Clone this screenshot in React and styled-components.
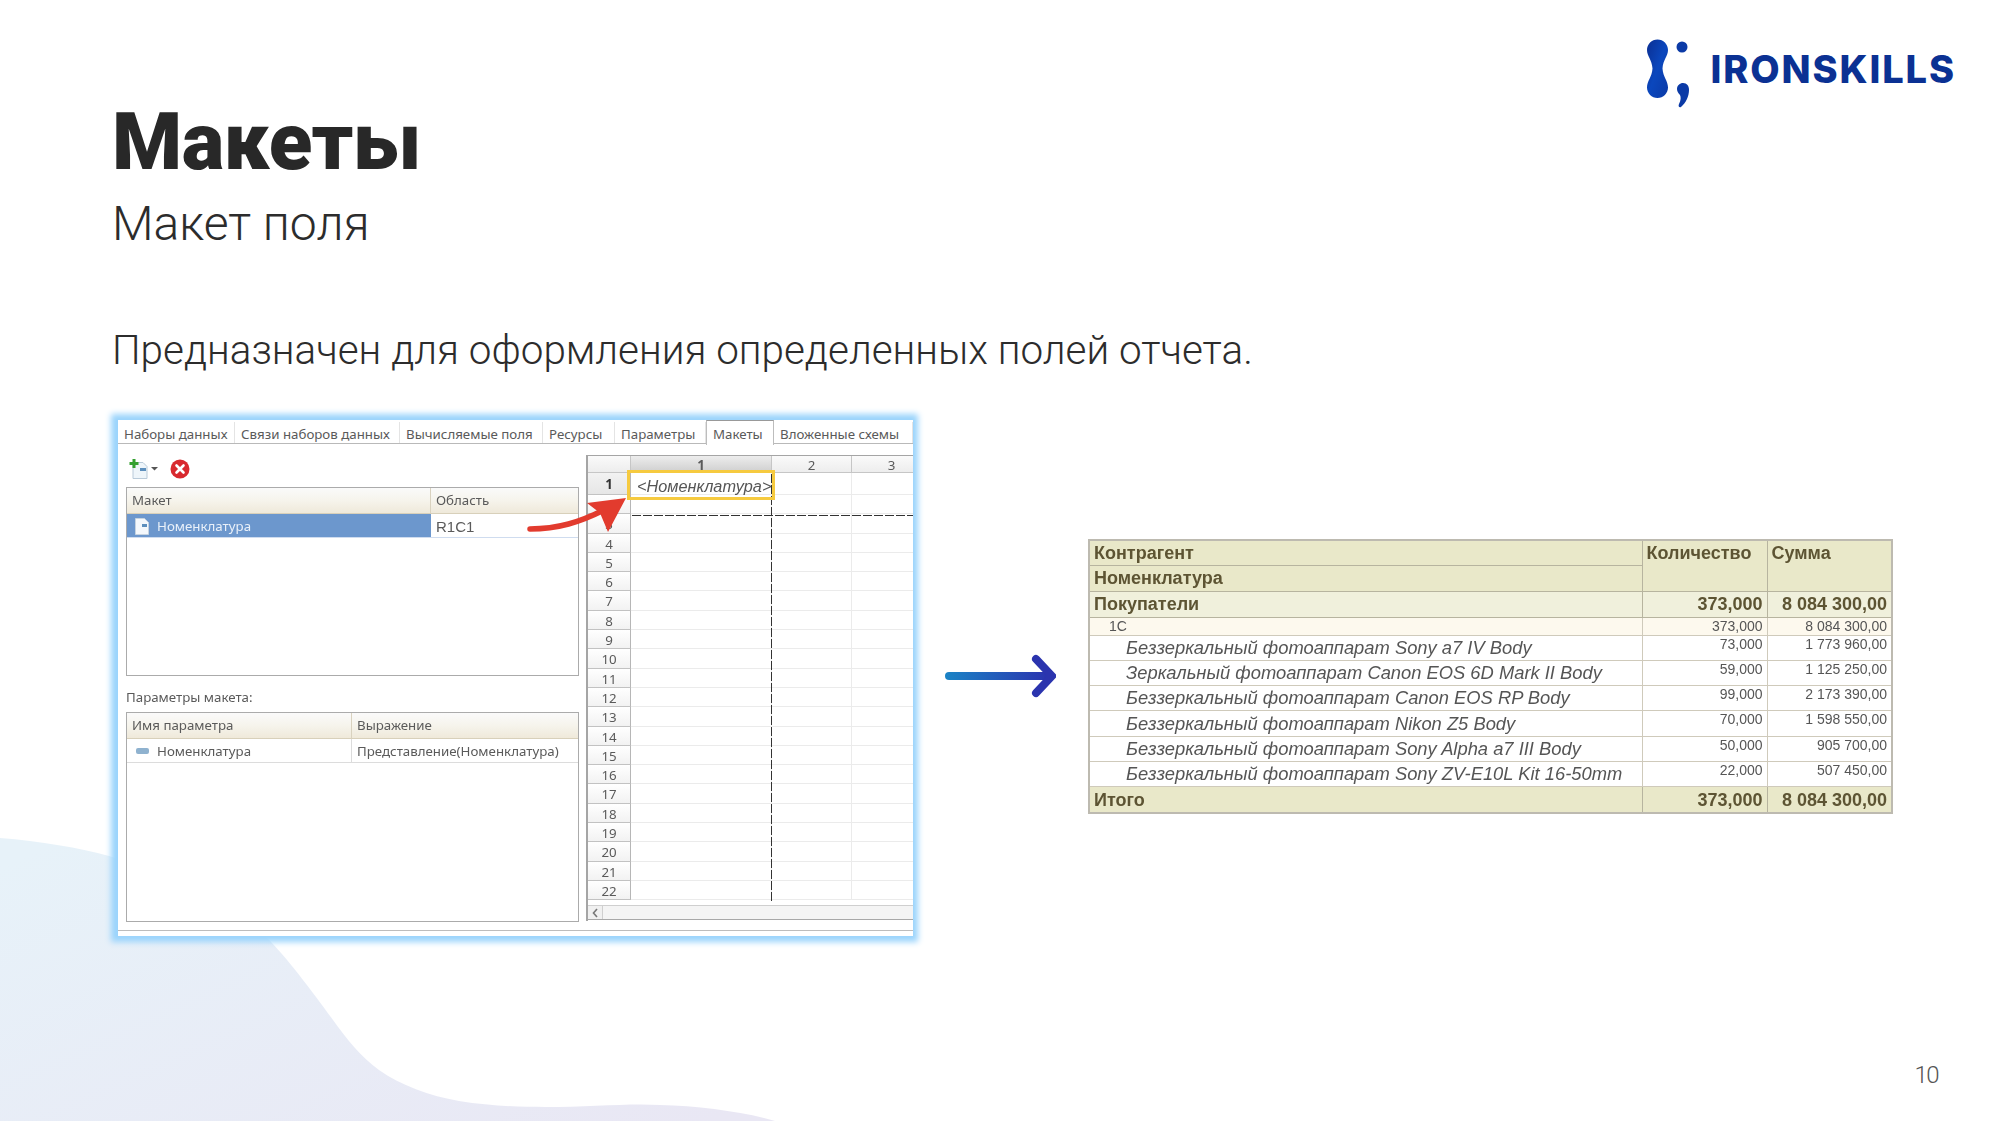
import React from "react";
import styled, { createGlobalStyle } from "styled-components";

const Global = createGlobalStyle`
  html, body { margin: 0; padding: 0; background: #fff; }
  * { box-sizing: border-box; }
`;

const Slide = styled.div`
  position: relative;
  width: 2000px;
  height: 1125px;
  overflow: hidden;
  background: #fff;
  font-family: "Inter", "Liberation Sans", sans-serif;
  display: flex;
  flex-direction: column;
`;
const BlobSvg = styled.svg`
  position: absolute;
  left: 0;
  top: 0;
  width: 2000px;
  height: 1125px;
`;
const Top = styled.header`
  position: relative;
  display: flex;
  justify-content: space-between;
  align-items: flex-start;
  padding: 0 44px 0 112px;
  height: 420px;
`;
const Heading = styled.div`
  display: flex;
  flex-direction: column;
  padding-top: 93px;
`;
const Title = styled.h1`
  margin: 0;
  font-family: "Roboto", sans-serif;
  font-weight: 900;
  font-size: 80px;
  line-height: 98px;
  letter-spacing: -0.4px;
  color: #282828;
`;
const Subtitle = styled.h2`
  margin: 5px 0 0;
  font-family: "Roboto", sans-serif;
  font-weight: 300;
  font-size: 48px;
  line-height: 56px;
  color: #2c2c2c;
`;
const Lead = styled.p`
  margin: 76px 0 0;
  font-family: "Roboto", sans-serif;
  font-weight: 300;
  font-size: 40.4px;
  line-height: 46px;
  color: #2c2c2c;
`;
const Logo = styled.div`
  display: flex;
  align-items: flex-start;
  gap: 19px;
  padding-top: 38px;
`;
const LogoWord = styled.span`
  margin-top: 8px;
  font-family: "Inter", sans-serif;
  font-weight: 800;
  font-size: 38px;
  line-height: 46px;
  letter-spacing: 1.9px;
  color: #0b3193;
`;

const Middle = styled.main`
  position: relative;
  display: flex;
  align-items: flex-start;
  padding-left: 118px;
`;
const Panel = styled.section`
  position: relative;
  width: 795px;
  height: 516px;
  background: #fff;
  box-shadow: -1px 0 6px 6px #9ad4fc;
  font-family: "Noto Sans", sans-serif;
  font-size: 13.3px;
  color: #5a5a5a;
  flex: none;
  filter: blur(0.4px);
`;
const Tabs = styled.div`
  display: flex;
  height: 24px;
  align-items: flex-end;
  border-bottom: 1.5px solid #b9b9b9;
`;
const Tab = styled.div`
  flex: none;
  width: ${(p) => p.$w}px;
  height: ${(p) => (p.$active ? 25 : 21)}px;
  margin-bottom: ${(p) => (p.$active ? -1.5 : 0)}px;
  padding-left: 6px;
  padding-top: 3px;
  display: flex;
  align-items: center;
  background: #fff;
  white-space: nowrap;
  border-right: 1px solid #e4e4e4;
  ${(p) => p.$active && "border: 1.5px solid #bdbdbd; border-bottom: none; border-top-color:#999;"}
`;
const Work = styled.div`
  display: grid;
  grid-template-columns: 468px 327px;
  height: 487px;
  border-bottom: 1.5px solid #bcbcbc;
  overflow: hidden;
`;
const LeftPane = styled.div`
  padding-left: 8px;
  width: 461px;
`;
const Toolbar = styled.div`
  height: 43px;
  padding: 15px 0 0 3px;
  display: flex;
  align-items: flex-start;
  gap: 9px;
`;
const ListBox = styled.div`
  width: 453px;
  height: ${(p) => p.$h}px;
  border: 1.5px solid #ababab;
  background: #fff;
`;
const ListHead = styled.div`
  display: grid;
  grid-template-columns: ${(p) => p.$first}px 1fr;
  height: 26px;
  background: linear-gradient(#fafafa, #f6f4ec 50%, #efe9da);
  border-bottom: 1.5px solid #d8d0ba;
`;
const ListHeadCell = styled.div`
  padding-left: 5px;
  line-height: 25px;
  border-right: ${(p) => (p.$sep ? "1.5px solid #d9d2bf" : "none")};
`;
const ListRow = styled.div`
  display: grid;
  grid-template-columns: ${(p) => p.$first}px 1fr;
  height: 24px;
  border-bottom: 1.5px solid ${(p) => p.$line};
`;
const ListCell = styled.div`
  display: flex;
  align-items: center;
  gap: 7px;
  padding-left: ${(p) => p.$pad}px;
  padding-top: 1px;
  white-space: nowrap;
  background: ${(p) => (p.$selected ? "#6c97cd" : "transparent")};
  color: ${(p) => (p.$selected ? "#e9f0f9" : "#5a5a5a")};
  border-right: ${(p) => (p.$sep ? "1.5px solid #dcdcdc" : "none")};
`;
const AreaText = styled.span`
  font-family: "Liberation Sans", sans-serif;
  font-size: 15px;
`;
const ParamLabel = styled.div`
  height: 36px;
  padding-top: 11px;
  line-height: 20px;
`;
const Sheet = styled.div`
  position: relative;
  margin-top: 11px;
  width: 327px;
  height: 466px;
  border-left: 2px solid #a5a5a5;
  border-top: 1.5px solid #a5a5a5;
  overflow: hidden;
`;
const SheetGrid = styled.div`
  display: grid;
  grid-template-columns: 43px 141px 80px 80px;
  grid-template-rows: 17px 22px repeat(21, 19.3px);
  width: 344px;
`;
const ColHead = styled.div`
  text-align: center;
  font-size: 13.3px;
  line-height: 18px;
  font-weight: ${(p) => (p.$sel ? 700 : 400)};
  background: ${(p) => (p.$sel ? "linear-gradient(#ededed,#cfcfcf)" : "linear-gradient(#fafafa,#ededed)")};
  border-right: 1.5px solid #c6c6c6;
  border-bottom: 1px solid #c6c6c6;
`;
const RowHead = styled.div`
  text-align: center;
  font-size: 13.3px;
  line-height: 18px;
  font-weight: ${(p) => (p.$sel ? 700 : 400)};
  padding-top: ${(p) => (p.$sel ? 2 : 1)}px;
  color: ${(p) => (p.$sel ? "#333" : "#5a5a5a")};
  background: ${(p) => (p.$sel ? "linear-gradient(#f2f2f2,#e6e6e6)" : "linear-gradient(#fff,#f2f2f2)")};
  border-right: 1.5px solid #b6b6b6;
  border-bottom: 1.5px solid #c2c2c2;
`;
const Cell = styled.div`
  position: relative;
  border-right: 1.5px solid #ebebeb;
  border-bottom: 1.5px solid #ebebeb;
`;
const FieldText = styled.span`
  position: absolute;
  left: 6px;
  top: 3px;
  font-family: "Liberation Sans", sans-serif;
  font-style: italic;
  font-size: 16.3px;
  line-height: 20px;
  white-space: nowrap;
  color: #555;
`;
const FieldBox = styled.div`
  position: absolute;
  left: -4px;
  top: -3px;
  width: 148px;
  height: 30px;
  border: 3px solid #f6ca3f;
  z-index: 2;
`;
const DashV = styled.div`
  position: absolute;
  left: 183px;
  top: 18px;
  width: 1.2px;
  height: 428px;
  background: repeating-linear-gradient(#333 0 9px, transparent 9px 11px);
`;
const DashH = styled.div`
  position: absolute;
  left: 44px;
  top: 59px;
  width: 290px;
  height: 1.2px;
  background: repeating-linear-gradient(90deg, #333 0 9px, transparent 9px 11px);
`;
const Scroll = styled.div`
  position: absolute;
  left: 0;
  top: 449px;
  width: 340px;
  height: 15px;
  display: flex;
  background: #f4f4f4;
  border-top: 1.5px solid #cfcfcf;
  border-bottom: 1.5px solid #a8a8a8;
`;
const ScrollBtn = styled.div`
  width: 15px;
  display: flex;
  align-items: center;
  justify-content: center;
  background: #f0f0f0;
  border-right: 1.5px solid #cfcfcf;
`;
const RedArrow = styled.svg`
  position: absolute;
  left: 0;
  top: 0;
  width: 795px;
  height: 516px;
  pointer-events: none;
`;

const ArrowSvg = styled.svg`
  flex: none;
  margin: 234px 0 0 29px;
  width: 114px;
  height: 44px;
`;
const ReportTable = styled.table`
  flex: none;
  margin: 119px 0 0 32px;
  width: 803px;
  table-layout: fixed;
  border-collapse: collapse;
  font-family: "Liberation Sans", sans-serif;
  border: 2px solid #bdbab0;
  filter: blur(0.3px);
`;
const Tr = styled.tr`
  height: ${(p) => p.$h}px;
  background: ${(p) => p.$bg};
`;
const Th = styled.td`
  padding: 0 0 0 ${(p) => p.$pad || 4}px;
  font-size: 18px;
  font-weight: 700;
  color: #5d5433;
  vertical-align: ${(p) => p.$valign || "middle"};
  line-height: 24px;
  border: 1px solid #b7b49f;
  white-space: nowrap;
`;
const NumB = styled(Th)`
  text-align: right;
  padding: 0 4px 0 0;
`;
const Td = styled.td`
  padding: 0 0 0 ${(p) => p.$pad || 0}px;
  font-size: ${(p) => p.$size || 18.35}px;
  font-style: ${(p) => (p.$italic ? "italic" : "normal")};
  color: #555;
  line-height: ${(p) => p.$lh || 20}px;
  white-space: nowrap;
  border: 1px solid #cfcabb;
`;
const NumT = styled(Td)`
  font-size: 14px;
  text-align: right;
  vertical-align: top;
  padding: 0 ${(p) => p.$right}px 0 0;
  line-height: 17px;
`;
const Footer = styled.footer`
  position: relative;
  margin-top: auto;
  display: flex;
  justify-content: flex-end;
  padding: 0 62px 36px 0;
  font-family: "Roboto", sans-serif;
  font-weight: 300;
  font-size: 24px;
  line-height: 28px;
  letter-spacing: -1.5px;
  color: #555;
`;

const items = [
  ["Беззеркальный фотоаппарат Sony a7 IV Body", "73,000", "1 773 960,00"],
  ["Зеркальный фотоаппарат Canon EOS 6D Mark II Body", "59,000", "1 125 250,00"],
  ["Беззеркальный фотоаппарат Canon EOS RP Body", "99,000", "2 173 390,00"],
  ["Беззеркальный фотоаппарат Nikon Z5 Body", "70,000", "1 598 550,00"],
  ["Беззеркальный фотоаппарат Sony Alpha a7 III Body", "50,000", "905 700,00"],
  ["Беззеркальный фотоаппарат Sony ZV-E10L Kit 16-50mm", "22,000", "507 450,00"],
];
const tabs = [
  ["Наборы данных", 117],
  ["Связи наборов данных", 165],
  ["Вычисляемые поля", 143],
  ["Ресурсы", 72],
  ["Параметры", 91],
  ["Макеты", 68],
  ["Вложенные схемы", 139],
];
const rows = Array.from({ length: 22 }, (_, i) => i + 1);

function DocIcon() {
  return (
    <svg width="16" height="17" viewBox="0 0 16 17">
      <path d="M1.5.5h9l4 4v12h-13z" fill="#f4f8fc" stroke="#c6d3e0" />
      <rect x="8" y="6" width="5" height="3" fill="#5d8fbd" />
    </svg>
  );
}

export default function App() {
  return (
    <Slide>
      <Global />
      <BlobSvg viewBox="0 0 2000 1125">
        <defs>
          <linearGradient id="blob" x1="0" y1="0.1" x2="1" y2="0.9">
            <stop offset="0" stopColor="#e7f2f9" />
            <stop offset="1" stopColor="#e9e7f4" />
          </linearGradient>
        </defs>
        <path
          d="M0 838C40 841 80 848 109 856C170 875 230 900 267 938C285 955 315 995 333 1020C345 1037 362 1058 379 1070C400 1085 430 1096 459 1101C490 1106 520 1107 545 1107C590 1107 630 1103 660 1105C700 1106 745 1112 775 1121L0 1121Z"
          fill="url(#blob)"
        />
      </BlobSvg>
      <Top>
        <Heading>
          <Title>Макеты</Title>
          <Subtitle>Макет поля</Subtitle>
          <Lead>Предназначен для оформления определенных полей отчета.</Lead>
        </Heading>
        <Logo>
          <svg width="44" height="72" viewBox="0 0 44 72">
            <defs>
              <linearGradient id="lg" x1="0" y1="0" x2="1" y2="1">
                <stop offset="0" stopColor="#0b2f93" />
                <stop offset="0.5" stopColor="#0b47bd" />
                <stop offset="1" stopColor="#0b3aa6" />
              </linearGradient>
            </defs>
            <path
              d="M10.5 1.5C16.3 1.5 21 6.2 21 12C21 18 16 22 15.5 30.5C16 39 21 43 21 49.5C21 55.3 16.3 60 10.5 60C4.7 60 0 55.3 0 49.5C0 43 5 39 5.5 30.5C5 22 0 18 0 12C0 6.2 4.7 1.5 10.5 1.5Z"
              fill="url(#lg)"
            />
            <circle cx="35" cy="9" r="5.5" fill="#0b3aa6" />
            <path
              d="M36 45C40 45 42 48 42 52C42 58 39 65 34 69C32 70 31 68 32 66C34 62 34 59 33 57C31 55 30 53 30 51C30 47.5 33 45 36 45Z"
              fill="#0b3aa6"
            />
          </svg>
          <LogoWord>IRONSKILLS</LogoWord>
        </Logo>
      </Top>
      <Middle>
        <Panel>
          <Tabs>
            {tabs.map(([t, w]) => (
              <Tab key={t} $w={w} $active={t === "Макеты"}>{t}</Tab>
            ))}
          </Tabs>
          <Work>
            <LeftPane>
              <Toolbar>
                <svg width="32" height="20" viewBox="0 0 32 20">
                  <path d="M4 3.5h10l4 4v12H4z" fill="#eef5fa" stroke="#b9cad9" />
                  <rect x="11" y="9" width="6" height="3" fill="#5d8fbd" />
                  <path d="M5 0v9M0.5 4.5h9" stroke="#35a030" strokeWidth="3" />
                  <path d="M22 8h7l-3.5 3.5z" fill="#555" />
                </svg>
                <svg width="20" height="20" viewBox="0 0 20 20">
                  <circle cx="10" cy="10" r="9.5" fill="#d8292e" />
                  <path d="M6.5 6.5l7 7M13.5 6.5l-7 7" stroke="#fff" strokeWidth="2.6" strokeLinecap="round" />
                </svg>
              </Toolbar>
              <ListBox $h={189}>
                <ListHead $first={304}>
                  <ListHeadCell $sep>Макет</ListHeadCell>
                  <ListHeadCell>Область</ListHeadCell>
                </ListHead>
                <ListRow $first={304} $line="#cfdcef">
                  <ListCell $selected $pad={7}>
                    <DocIcon />
                    Номенклатура
                  </ListCell>
                  <ListCell $pad={5}><AreaText>R1C1</AreaText></ListCell>
                </ListRow>
              </ListBox>
              <ParamLabel>Параметры макета:</ParamLabel>
              <ListBox $h={210}>
                <ListHead $first={225}>
                  <ListHeadCell $sep>Имя параметра</ListHeadCell>
                  <ListHeadCell>Выражение</ListHeadCell>
                </ListHead>
                <ListRow $first={225} $line="#dcdcdc">
                  <ListCell $sep $pad={7}>
                    <svg width="16" height="8" viewBox="0 0 16 8">
                      <rect x="2" y="1" width="13" height="6" rx="2" fill="#8fb2cf" />
                    </svg>
                    Номенклатура
                  </ListCell>
                  <ListCell $pad={5}>Представление(Номенклатура)</ListCell>
                </ListRow>
              </ListBox>
            </LeftPane>
            <Sheet>
              <SheetGrid>
                <ColHead />
                <ColHead $sel>1</ColHead>
                <ColHead>2</ColHead>
                <ColHead>3</ColHead>
                {rows.map((r) => (
                  <React.Fragment key={r}>
                    <RowHead $sel={r === 1}>{r}</RowHead>
                    <Cell>
                      {r === 1 && (
                        <>
                          <FieldText>&lt;Номенклатура&gt;</FieldText>
                          <FieldBox />
                        </>
                      )}
                    </Cell>
                    <Cell />
                    <Cell />
                  </React.Fragment>
                ))}
              </SheetGrid>
              <DashV />
              <DashH />
              <Scroll>
                <ScrollBtn>
                  <svg width="6" height="10" viewBox="0 0 6 10">
                    <path d="M5 1L1.5 5L5 9" fill="none" stroke="#777" strokeWidth="1.6" />
                  </svg>
                </ScrollBtn>
              </Scroll>
            </Sheet>
          </Work>
          <RedArrow viewBox="0 0 795 516">
            <path d="M412 109C440 109 462 102 486 90" fill="none" stroke="#e23b2e" strokeWidth="5.5" strokeLinecap="round" />
            <path d="M508 78L469 83L482 93L490 112Z" fill="#e23b2e" />
          </RedArrow>
        </Panel>
        <ArrowSvg viewBox="0 0 114 44">
          <defs>
            <linearGradient id="ar" gradientUnits="userSpaceOnUse" x1="0" y1="22" x2="110" y2="22">
              <stop offset="0" stopColor="#1a86c6" />
              <stop offset="1" stopColor="#2b30ae" />
            </linearGradient>
          </defs>
          <path d="M7 22H106" stroke="url(#ar)" strokeWidth="8" strokeLinecap="round" />
          <path d="M94 5L110 22L94 39" fill="none" stroke="#2b34ae" strokeWidth="8" strokeLinecap="round" strokeLinejoin="miter" />
        </ArrowSvg>
        <ReportTable>
          <colgroup>
            <col style={{ width: 553 }} />
            <col style={{ width: 125 }} />
            <col style={{ width: 125 }} />
          </colgroup>
          <tbody>
            <Tr $h={25.5} $bg="#e9e8c9">
              <Th>Контрагент</Th>
              <Th rowSpan={2} $valign="top">Количество</Th>
              <Th rowSpan={2} $valign="top">Сумма</Th>
            </Tr>
            <Tr $h={25.5} $bg="#e9e8c9">
              <Th>Номенклатура</Th>
            </Tr>
            <Tr $h={26} $bg="#f0f0dc">
              <Th>Покупатели</Th>
              <NumB>373,000</NumB>
              <NumB>8 084 300,00</NumB>
            </Tr>
            <Tr $h={18} $bg="#fdf9ee">
              <Td $size={14} $pad={19} $lh={16}>1С</Td>
              <NumT $right={4}>373,000</NumT>
              <NumT $right={4}>8 084 300,00</NumT>
            </Tr>
            {items.map(([n, q, s]) => (
              <Tr key={n} $h={25.3} $bg="#fff">
                <Td $italic $pad={36}>{n}</Td>
                <NumT $right={4}>{q}</NumT>
                <NumT $right={4}>{s}</NumT>
              </Tr>
            ))}
            <Tr $h={26} $bg="#e9e8c9">
              <Th>Итого</Th>
              <NumB>373,000</NumB>
              <NumB>8 084 300,00</NumB>
            </Tr>
          </tbody>
        </ReportTable>
      </Middle>
      <Footer>10</Footer>
    </Slide>
  );
}
